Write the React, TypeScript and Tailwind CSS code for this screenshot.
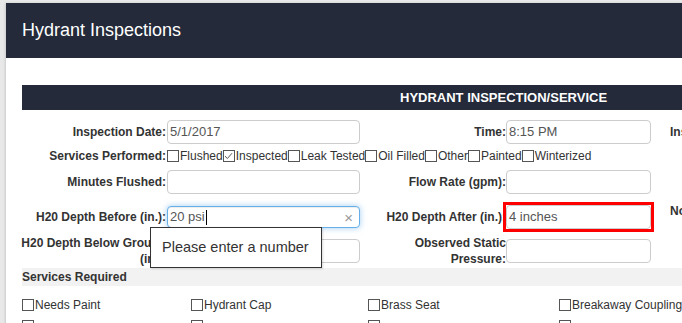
import type { ReactNode } from "react";

const font = "font-['Liberation_Sans',Arial,sans-serif]";

function Label(props: { children: ReactNode; className?: string }) {
  return (
    <div className={"text-right text-[12px] font-bold leading-[16px] text-[#333] " + (props.className ?? "")}>
      {props.children}
    </div>
  );
}

function TextInput(props: { value?: string; className?: string; children?: ReactNode }) {
  return (
    <div
      className={
        "flex h-[24px] items-center rounded-[4px] border border-[#ccc] bg-white pl-[2px] text-[13px] text-[#555] " +
        (props.className ?? "")
      }
    >
      {props.value}
      {props.children}
    </div>
  );
}

function Box(props: { checked?: boolean }) {
  return (
    <span className="inline-flex h-[12px] w-[12px] shrink-0 items-center justify-center border border-[#555] bg-white">
      {props.checked && (
        <svg width="9" height="8" viewBox="0 0 9 8" fill="none">
          <path d="M1 4.2 L3.4 6.5 L8 1.2" stroke="#555" strokeWidth="1" />
        </svg>
      )}
    </span>
  );
}

function Check(props: { label: string; checked?: boolean }) {
  return (
    <span className="inline-flex items-center">
      <Box checked={props.checked} />
      <span className="pl-[1px] text-[12px] leading-[14px] text-[#333]">{props.label}</span>
    </span>
  );
}

const performed = [
  { label: "Flushed" },
  { label: "Inspected", checked: true },
  { label: "Leak Tested" },
  { label: "Oil Filled" },
  { label: "Other" },
  { label: "Painted" },
  { label: "Winterized" },
];

const required = ["Needs Paint", "Hydrant Cap", "Brass Seat", "Breakaway Coupling", "", "", "", ""];

export default function App() {
  return (
    <div className={"relative h-[323px] w-[682px] overflow-hidden bg-[#e8e8e8] pl-[6px] pt-[3px] " + font}>
      <div className="h-[400px] w-[1100px] bg-white shadow-[-1px_0_2px_rgba(0,0,0,0.12)]">
        <div className="flex h-[55px] items-center bg-[#242a39] pl-[16px] text-[18px] text-white">
          Hydrant Inspections
        </div>

        <div className="pl-[16px] pt-[27px]">
          <div className="flex h-[25px] items-center bg-[#242a39] pl-[378px] text-[13px] font-bold text-white">
            HYDRANT INSPECTION/SERVICE
          </div>
        </div>

        <div className="pl-[15px] pt-[9px]">
          <div className="flex h-[26px] items-center">
            <Label className="w-[146px] pr-[1px]">Inspection Date:</Label>
            <TextInput value="5/1/2017" className="w-[193px]" />
            <Label className="w-[146px]">Time:</Label>
            <TextInput value="8:15 PM" className="w-[145px]" />
            <Label className="ml-[19px] text-left">Inspector:</Label>
          </div>

          <div className="flex h-[22px] items-center">
            <Label className="w-[146px] pr-[1px]">Services Performed:</Label>
            {performed.map((p) => (
              <Check key={p.label} label={p.label} checked={p.checked} />
            ))}
          </div>

          <div className="flex h-[30px] items-center">
            <Label className="w-[146px] pr-[1px]">Minutes Flushed:</Label>
            <TextInput className="h-[23px] w-[193px]" />
            <Label className="w-[146px]">Flow Rate (gpm):</Label>
            <TextInput className="h-[23px] w-[145px]" />
          </div>

          <div className="flex h-[40px] items-center">
            <Label className="w-[146px] pr-[1px]">H20 Depth Before (in.):</Label>
            <div className="flex h-[22px] w-[193px] items-center rounded-[4px] border border-[#66afe9] bg-white pl-[2px] text-[13px] text-[#555] shadow-[inset_0_1px_1px_rgba(0,0,0,0.075),0_0_6px_rgba(102,175,233,0.6)]">
              20 psi
              <span className="ml-[1px] h-[15px] w-[1px] bg-black" />
              <span className="ml-auto pr-[6px] text-[15px] leading-none text-[#999]">×</span>
            </div>
            <Label className="w-[146px]">H20 Depth After (in.):</Label>
            <div className="relative -mx-[3px] border-[3px] border-[#f00] bg-white">
              <TextInput value="4 inches" className="h-[22px] w-[145px]" />
            </div>
            <Label className="ml-[19px] self-start pt-[6px] text-left">Nozzle</Label>
          </div>

          <div className="flex h-[28px] items-center">
            <Label className="w-[146px] pr-[1px]">H20 Depth Below Ground (in.):</Label>
            <TextInput className="w-[193px]" />
            <Label className="w-[146px] pl-[50px]">Observed Static Pressure:</Label>
            <TextInput className="w-[145px]" />
          </div>
        </div>

        <div className="pl-[16px] pt-[3px]">
          <div className="flex h-[18px] items-center bg-[#f2f2f2] text-[12px] font-bold text-[#333]">
            Services Required
          </div>
          <div className="grid grid-cols-[169px_177px_191px_220px] pt-[8px]">
            {required.map((r, i) => (
              <div key={i} className="flex h-[22px] items-start pt-[4px]">
                <Check label={r} />
              </div>
            ))}
          </div>
        </div>
      </div>

      <div className="absolute left-[150px] top-[227px] flex h-[41px] w-[172px] items-center border border-[#333] bg-white pl-[11px] text-[14.5px] text-[#333] shadow-[1px_1px_2px_rgba(0,0,0,0.15)]">
        Please enter a number
      </div>
    </div>
  );
}
